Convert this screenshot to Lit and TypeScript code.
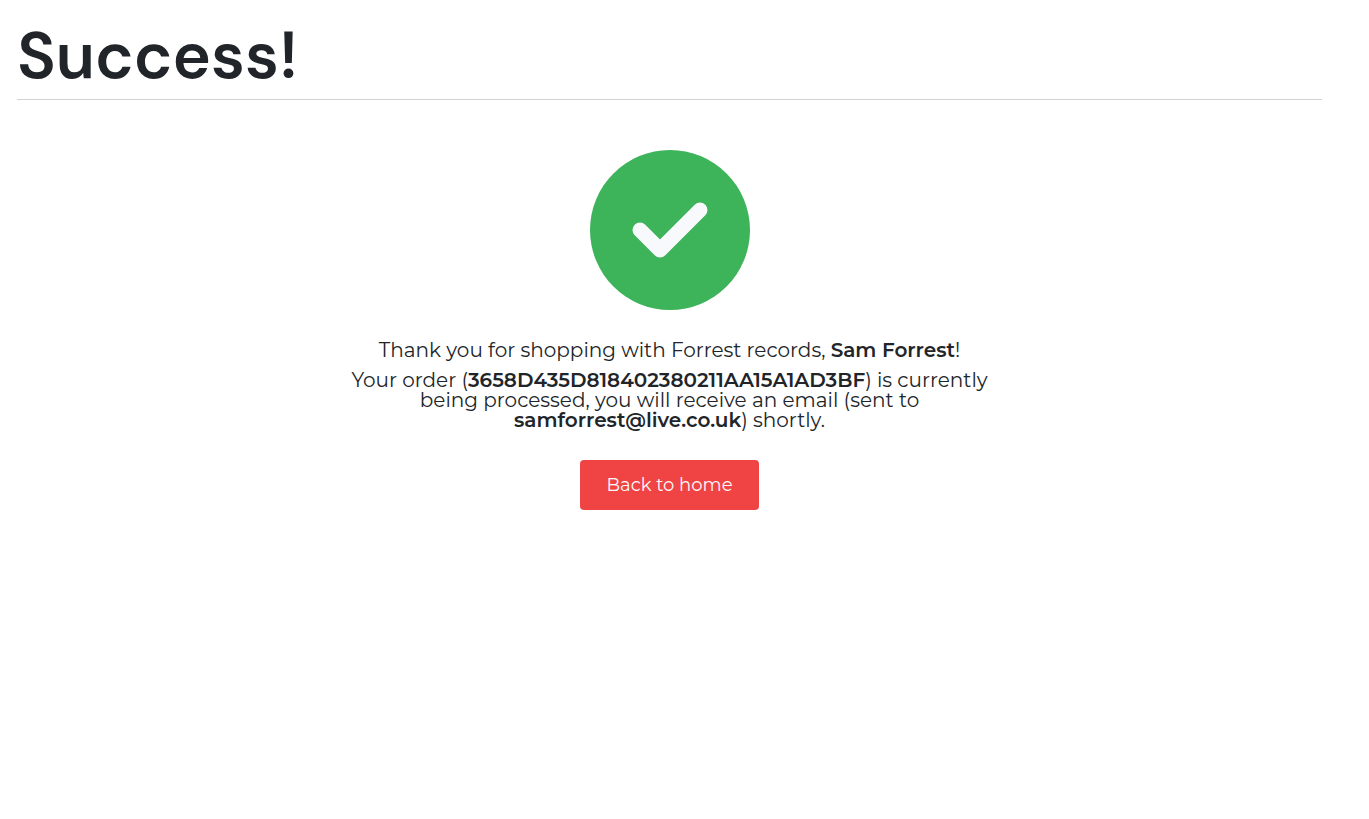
import { LitElement, html, css } from "lit";
import { customElement, property } from "lit/decorators.js";

@customElement("app-root")
export class AppRoot extends LitElement {
  @property() customer = "Sam Forrest";
  @property() order = "3658D435D818402380211AA15A1AD3BF";
  @property() email = "samforrest@live.co.uk";

  static styles = css`
    :host {
      display: block;
      padding: 16px 47px 32px 17px;
      font-family: Montserrat, Inter, sans-serif;
      color: #212529;
    }
    .title {
      margin: 0;
      padding-bottom: 3px;
      border-bottom: 1px solid #d3d3d3;
      font-family: "DM Sans", Inter, sans-serif;
      font-size: 65px;
      font-weight: 600;
      line-height: 80px;
    }
    .content {
      display: flex;
      flex-direction: column;
      align-items: center;
      width: 50%;
      margin: 50px auto 0;
      text-align: center;
    }
    .tick {
      display: block;
      width: 160px;
      height: 160px;
      margin-bottom: 30px;
    }
    .message {
      margin: 0 0 10px;
      font-size: 20px;
      font-weight: 400;
      line-height: 20px;
    }
    .message strong {
      font-weight: 600;
    }
    .home {
      margin-top: 20px;
      padding: 0 26px;
      border-radius: 4px;
      background: #f04444;
      color: #f8f9fa;
      font-size: 18px;
      line-height: 50px;
      text-decoration: none;
    }
  `;

  render() {
    return html`
      <h1 class="title">Success!</h1>
      <main class="content">
        <svg class="tick" viewBox="0 0 160 160" aria-hidden="true">
          <circle cx="80" cy="80" r="80" fill="#3db35a" />
          <path
            d="M50 80 70 100 110 60"
            fill="none"
            stroke="#f8f9fc"
            stroke-width="15"
            stroke-linecap="round"
            stroke-linejoin="round"
          />
        </svg>
        <p class="message">Thank you for shopping with Forrest records, <strong>${this.customer}</strong>!</p>
        <p class="message">Your order (<strong>${this.order}</strong>) is currently being processed, you will receive an email (sent to <strong>${this.email}</strong>) shortly.</p>
        <a class="home" href="#">Back to home</a>
      </main>
    `;
  }
}
